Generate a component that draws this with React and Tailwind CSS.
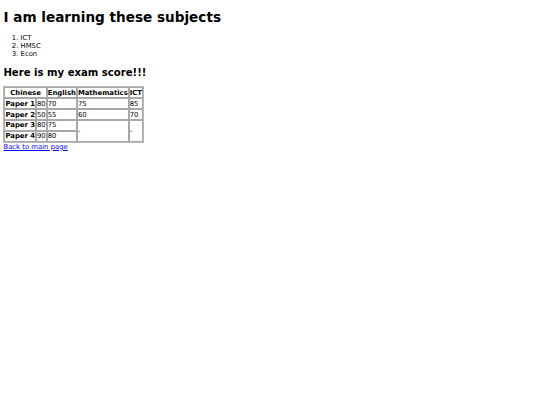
export default function App() {
  const th = "border border-[#a8a8a8] px-0 py-[0.45px] font-bold text-center leading-[normal]";
  const thl = "border border-[#a8a8a8] px-0 py-[0.45px] font-bold text-left leading-[normal]";
  const td = "border border-[#a8a8a8] px-0 py-[0.45px] text-left leading-[normal]";
  return (
    <div className="font-['DejaVu_Sans',sans-serif] text-[6.86px] leading-[normal] text-black bg-white min-h-[405px] px-[3.43px] pb-[3.43px] pt-px">
      <h1 className="text-[13.6px] font-bold leading-[normal] mt-[8.2px] mb-[9.19px]">I am learning these subjects</h1>
      <ol className="list-decimal pl-[17.14px] my-[6.86px]">
        <li>ICT</li>
        <li>HMSC</li>
        <li>Econ</li>
      </ol>
      <h2 className="text-[10.1px] font-bold leading-[normal] mt-[8.53px] mb-[8.53px]">Here is my exam score!!!</h2>
      <table className="border-separate border-spacing-[0.6px] border border-[#b8b8b8]">
        <tbody>
          <tr>
            <th colSpan={2} className={th}>Chinese</th>
            <th className={th}>English</th>
            <th className={th}>Mathematics</th>
            <th className={th}>ICT</th>
          </tr>
          <tr>
            <th className={thl}>Paper 1</th>
            <td className={td}>80</td>
            <td className={td}>70</td>
            <td className={td}>75</td>
            <td className={td}>85</td>
          </tr>
          <tr>
            <th className={thl}>Paper 2</th>
            <td className={td}>50</td>
            <td className={td}>55</td>
            <td className={td}>60</td>
            <td className={td}>70</td>
          </tr>
          <tr>
            <th className={thl}>Paper 3</th>
            <td className={td}>80</td>
            <td className={td}>75</td>
            <td rowSpan={2} className={td}>-</td>
            <td rowSpan={2} className={td}>-</td>
          </tr>
          <tr>
            <th className={thl}>Paper 4</th>
            <td className={td}>90</td>
            <td className={td}>80</td>
          </tr>
        </tbody>
      </table>
      <a href="#" className="text-[#0000ee] underline leading-[normal]">Back to main page</a>
    </div>
  );
}
